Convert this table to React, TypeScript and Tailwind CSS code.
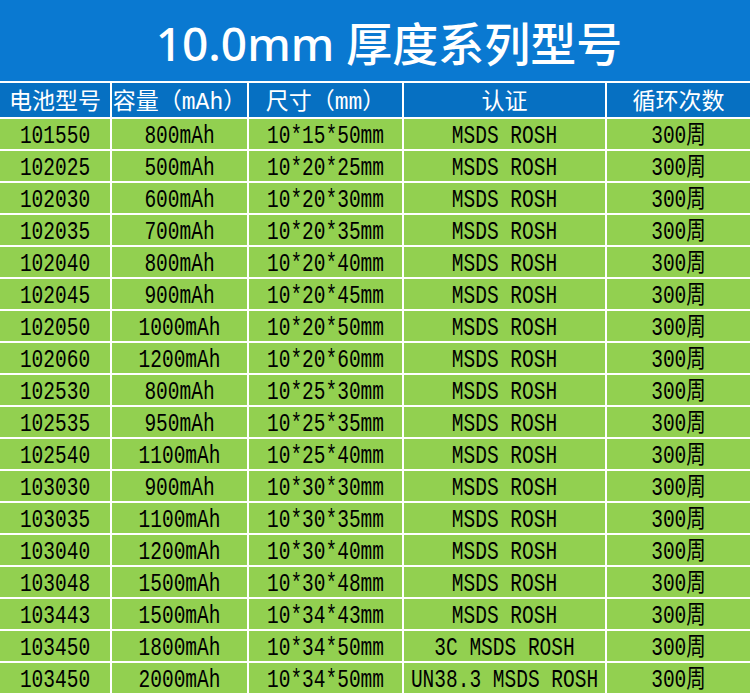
const rows = [
  ['101550', '800mAh', '10*15*50mm', 'MSDS ROSH'],
  ['102025', '500mAh', '10*20*25mm', 'MSDS ROSH'],
  ['102030', '600mAh', '10*20*30mm', 'MSDS ROSH'],
  ['102035', '700mAh', '10*20*35mm', 'MSDS ROSH'],
  ['102040', '800mAh', '10*20*40mm', 'MSDS ROSH'],
  ['102045', '900mAh', '10*20*45mm', 'MSDS ROSH'],
  ['102050', '1000mAh', '10*20*50mm', 'MSDS ROSH'],
  ['102060', '1200mAh', '10*20*60mm', 'MSDS ROSH'],
  ['102530', '800mAh', '10*25*30mm', 'MSDS ROSH'],
  ['102535', '950mAh', '10*25*35mm', 'MSDS ROSH'],
  ['102540', '1100mAh', '10*25*40mm', 'MSDS ROSH'],
  ['103030', '900mAh', '10*30*30mm', 'MSDS ROSH'],
  ['103035', '1100mAh', '10*30*35mm', 'MSDS ROSH'],
  ['103040', '1200mAh', '10*30*40mm', 'MSDS ROSH'],
  ['103048', '1500mAh', '10*30*48mm', 'MSDS ROSH'],
  ['103443', '1500mAh', '10*34*43mm', 'MSDS ROSH'],
  ['103450', '1800mAh', '10*34*50mm', '3C MSDS ROSH'],
  ['103450', '2000mAh', '10*34*50mm', 'UN38.3 MSDS ROSH'],
];

const headers = ['电池型号', '容量（mAh）', '尺寸（mm）', '认证', '循环次数'];

const cellFont = {
  fontFamily: '"Liberation Mono", "Noto Sans CJK SC", monospace',
};

export default function App() {
  return (
    <div className="w-[750px] h-[700px] bg-white overflow-hidden">
      {/* title */}
      <div
        className="h-[81px] bg-[#0a79d1] flex items-center justify-center pl-7 pt-1 text-white text-[46px] font-medium leading-none"
        style={{ fontFamily: '"Noto Sans", "Noto Sans CJK SC", sans-serif' }}
      >
        10.0mm 厚度系列型号
      </div>

      <div className="mt-[2px] grid grid-cols-[110px_135px_153px_201px_1fr] gap-[2px] bg-white">
        {headers.map((h) => (
          <div
            key={h}
            className="h-[34px] bg-[#0670c2] text-white text-[23px] flex items-center justify-center pt-[7px] whitespace-nowrap leading-none"
            style={cellFont}
          >
            {h}
          </div>
        ))}

        {rows.map((r, i) => (
          <Row key={i} cells={[...r, '300周']} />
        ))}
      </div>
    </div>
  );
}

function Row({ cells }: { cells: string[] }) {
  return (
    <>
      {cells.map((c, j) => (
        <div
          key={j}
          className="h-[30px] bg-[#92d050] text-black text-[19.5px] flex items-center justify-center whitespace-nowrap leading-none pt-[8px]"
          style={cellFont}
        >
          <span className="inline-block scale-y-[1.3]">{c}</span>
        </div>
      ))}
    </>
  );
}
